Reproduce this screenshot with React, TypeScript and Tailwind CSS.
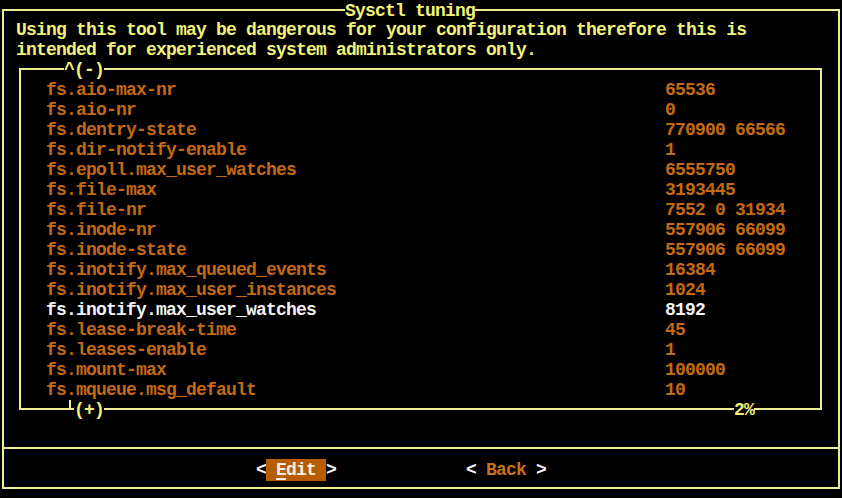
const rows: [string, string][] = [
  ["fs.aio-max-nr", "65536"],
  ["fs.aio-nr", "0"],
  ["fs.dentry-state", "770900 66566"],
  ["fs.dir-notify-enable", "1"],
  ["fs.epoll.max_user_watches", "6555750"],
  ["fs.file-max", "3193445"],
  ["fs.file-nr", "7552 0 31934"],
  ["fs.inode-nr", "557906 66099"],
  ["fs.inode-state", "557906 66099"],
  ["fs.inotify.max_queued_events", "16384"],
  ["fs.inotify.max_user_instances", "1024"],
  ["fs.inotify.max_user_watches", "8192"],
  ["fs.lease-break-time", "45"],
  ["fs.leases-enable", "1"],
  ["fs.mount-max", "100000"],
  ["fs.mqueue.msg_default", "10"],
];

const selected = 11;

export default function App() {
  return (
    <div
      className="w-[842px] h-[498px] bg-black overflow-hidden pt-[9px] pl-[2px] text-[18px] leading-[22px] tracking-[-0.8px] font-bold whitespace-pre"
      style={{ fontFamily: '"Liberation Mono", "DejaVu Sans Mono", monospace' }}
    >
      <div className="w-[838px] h-[480px] border-2 border-[#eeee90] flex flex-col">
        {/* title sits on the top border */}
        <div className="-mt-[12px] h-[20px] flex">
          <span className="ml-[341px] h-[20px] bg-black text-[#f2f27a] pt-[1px]">Sysctl tuning</span>
        </div>

        <div className="pl-[12px] text-[#f2f27a]">
          <div className="h-[20px]">Using this tool may be dangerous for your configuration therefore this is</div>
          <div className="h-[20px]">intended for experienced system administrators only.</div>
        </div>

        {/* list box */}
        <div className="relative ml-[15px] mt-[9px] w-[803px] h-[342px] border-2 border-[#eeee90] flex flex-col">
          <div className="-mt-[11px] h-[20px] flex">
            <span className="ml-[43px] h-[20px] bg-black text-[#f2f27a]">^(-)</span>
          </div>
          {rows.map(([name, value], i) => (
            <div
              key={name}
              className={`h-[20px] flex pl-[25px] ${
                i === selected ? "text-[#f4f4f4]" : "text-[#c46a14]"
              }`}
            >
              <span className="w-[619px]">{name}</span>
              <span>{value}</span>
            </div>
          ))}
          <div className="absolute left-[43px] -bottom-[11px] h-[20px] flex">
            <div className="w-[10px] h-[20px]">
              <div className="ml-[5px] mt-[1px] w-[2px] h-[9px] bg-[#eeee90]" />
            </div>
            <span className="h-[20px] bg-black text-[#f2f27a]">(+)</span>
          </div>
          <div className="absolute left-[713px] -bottom-[11px] h-[20px] flex">
            <span className="h-[20px] bg-black text-[#f2f27a]">2%</span>
          </div>
        </div>

        <div className="mt-[37px] border-t-2 border-[#eeee90]" />

        {/* buttons */}
        <div className="flex-1 flex items-center pt-[4px]">
          <div className="ml-[252px] flex">
            <span className="text-[#f4f4f4]">{"<"}</span>
            <span className="bg-[#b85c00] text-[#f4efe4]">
              {" "}
              <span className="underline underline-offset-[3px] decoration-2">E</span>
              {"dit "}
            </span>
            <span className="text-[#f4f4f4]">{">"}</span>
          </div>
          <div className="ml-[130px] flex">
            <span className="text-[#f4f4f4]">{"< "}</span>
            <span className="text-[#c87418]">Back</span>
            <span className="text-[#f4f4f4]">{" >"}</span>
          </div>
        </div>
      </div>
    </div>
  );
}
